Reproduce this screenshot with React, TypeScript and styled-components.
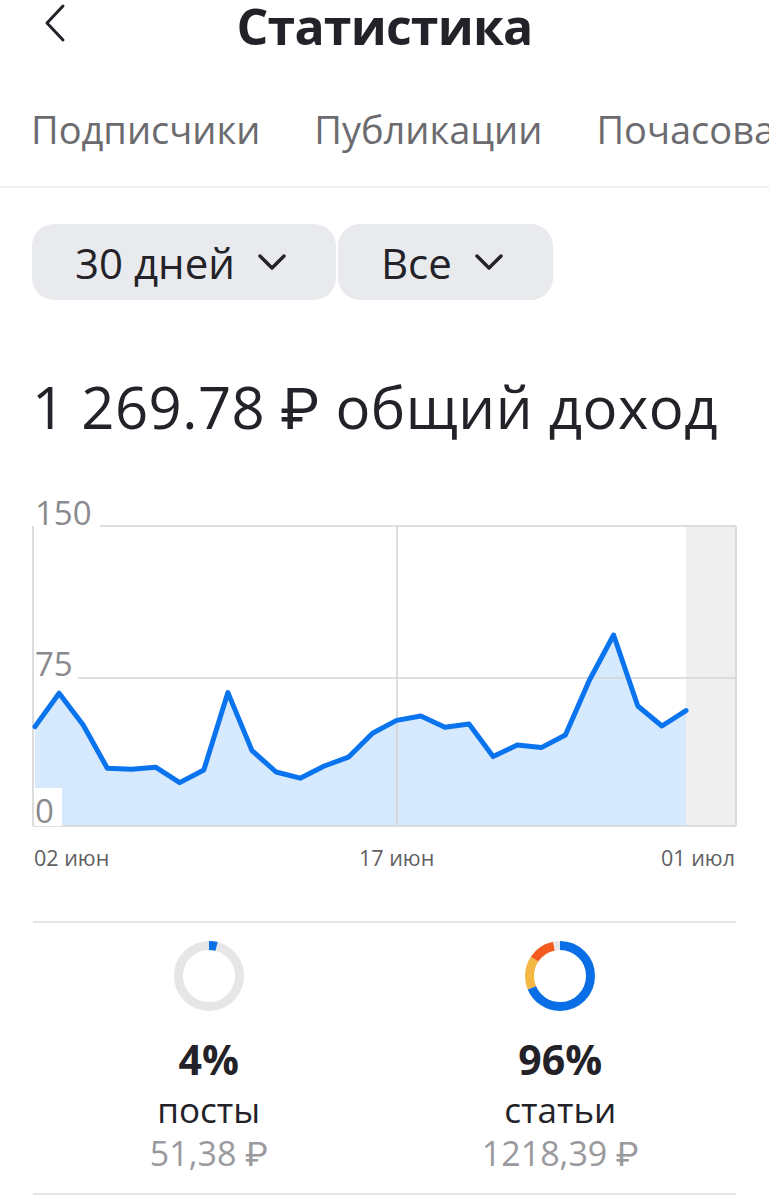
import React from 'react';
import styled, { createGlobalStyle } from 'styled-components';

const GlobalStyle = createGlobalStyle`
  * { box-sizing: border-box; }
  body {
    margin: 0;
    background: #fff;
    font-family: "Open Sans", Roboto, "DejaVu Sans", sans-serif;
    color: #222228;
  }
`;

const Page = styled.div`
  width: 769px;
  height: 1200px;
  overflow: hidden;
  background: #fff;
`;

const Header = styled.header`
  display: grid;
  grid-template-columns: 1fr auto 1fr;
  align-items: center;
  height: 52px;
`;

const BackButton = styled.button`
  justify-self: start;
  display: flex;
  align-items: center;
  margin: -6px 0 0 42px;
  padding: 0;
  border: 0;
  background: none;
  cursor: pointer;
`;

const Title = styled.h1`
  margin: 0;
  font-size: 50px;
  font-weight: 700;
  letter-spacing: -0.8px;
  line-height: 52px;
  color: #222228;
`;

const Tabs = styled.nav`
  display: flex;
  gap: 54px;
  height: 136px;
  padding: 55px 0 0 31px;
  white-space: nowrap;
  overflow: hidden;
  border-bottom: 2px solid #eef0f0;
`;

const Tab = styled.span`
  font-size: 38px;
  line-height: 44px;
  color: #6b6b70;
`;

const Filters = styled.div`
  display: flex;
  gap: 2px;
  padding: 36px 0 0 32px;
`;

const FilterButton = styled.button`
  display: flex;
  align-items: center;
  gap: 23px;
  height: 76px;
  padding: 0 50px 0 43px;
  border: 0;
  border-radius: 22px;
  background: #e9eaee;
  font-family: inherit;
  font-size: 42px;
  color: #222228;
`;

const Total = styled.h2`
  margin: 75px 0 0 32px;
  font-size: 58px;
  font-weight: 400;
  letter-spacing: 0.5px;
  line-height: 64px;
  color: #222228;
  white-space: nowrap;
`;

const ChartBox = styled.div`
  margin-top: 51px;
  height: 390px;
`;

const Stats = styled.section`
  display: grid;
  grid-template-columns: 1fr 1fr;
  margin: 41px 33px 0;
  padding: 18px 0 20px;
  border-top: 2px solid #e4e4e6;
  border-bottom: 2px solid #e4e4e6;
`;

const Stat = styled.div`
  display: flex;
  flex-direction: column;
  align-items: center;
`;

const Percent = styled.div`
  margin-top: 26px;
  font-size: 41px;
  font-weight: 700;
  line-height: 44px;
  color: #222228;
`;

const StatLabel = styled.div`
  margin-top: 9px;
  font-size: 35px;
  line-height: 40px;
  color: #222228;
`;

const StatAmount = styled.div`
  margin-top: 3px;
  font-size: 34px;
  line-height: 40px;
  color: #9a9a9e;
`;

const ChevronDown = () => (
  <svg width="28" height="16" viewBox="0 0 28 16" fill="none">
    <path d="M2 2l12 12L26 2" stroke="#222228" strokeWidth="3.4" strokeLinecap="round" strokeLinejoin="round" />
  </svg>
);

const ChevronLeft = () => (
  <svg width="24" height="40" viewBox="0 0 24 40" fill="none">
    <path d="M21 3L5 20l16 17" stroke="#222228" strokeWidth="3" strokeLinecap="round" strokeLinejoin="round" />
  </svg>
);

// daily income, 02 июн .. 29 июн
const income = [
  49.7, 66.4, 50.5, 28.9, 28.4, 29.4, 21.7, 28, 66.7, 37.7, 27, 23.9, 30, 34.4, 46.4, 52.8,
  55, 49.4, 51, 34.7, 40.5, 39.2, 45.5, 73, 95.5, 60, 50, 57.7,
];

const X0 = 35;
const STEP = 24.11;
const TOP = 36;
const BOTTOM = 336;
const LEFT = 33;
const RIGHT = 736;

const yOf = (v: number) => BOTTOM - (v / 150) * (BOTTOM - TOP);

const IncomeChart = () => {
  const pts = income.map((v, i) => [X0 + i * STEP, yOf(v)] as const);
  const line = pts.map(([x, y], i) => `${i ? 'L' : 'M'}${x.toFixed(1)} ${y.toFixed(1)}`).join(' ');
  const lastX = pts[pts.length - 1][0];
  const area = `${line} L${lastX.toFixed(1)} ${BOTTOM} L${X0} ${BOTTOM} Z`;
  const mid = yOf(75) + 2;
  const labelFont = { fontFamily: '"Open Sans", Roboto, sans-serif' };

  return (
    <svg width="769" height="390" viewBox="0 0 769 390">
      <rect x={686} y={TOP} width={RIGHT - 686} height={BOTTOM - TOP} fill="#efefef" />
      <path d={area} fill="#d7e9fc" />
      <g stroke="#d4d4d6" strokeWidth="1.6">
        <line x1={100} y1={TOP} x2={RIGHT} y2={TOP} />
        <line x1={78} y1={mid} x2={RIGHT} y2={mid} />
        <line x1={LEFT} y1={BOTTOM} x2={RIGHT} y2={BOTTOM} />
        <line x1={LEFT} y1={TOP} x2={LEFT} y2={BOTTOM} />
        <line x1={397} y1={TOP} x2={397} y2={BOTTOM} />
        <line x1={RIGHT} y1={TOP} x2={RIGHT} y2={BOTTOM} />
      </g>
      <path d={line} fill="none" stroke="#0a74ef" strokeWidth="5" strokeLinejoin="round" strokeLinecap="round" />
      <rect x={35} y={298} width={27} height={38} fill="#fff" />
      <g fill="#8a8a8e" fontSize="33" style={labelFont}>
        <text x={35} y={35}>150</text>
        <text x={35} y={186}>75</text>
        <text x={35} y={333}>0</text>
      </g>
      <g fill="#5f5f63" fontSize="21.5" style={labelFont}>
        <text x={34} y={376}>02 июн</text>
        <text x={359} y={376}>17 июн</text>
        <text x={735} y={376} textAnchor="end">01 июл</text>
      </g>
    </svg>
  );
};

interface Segment {
  color: string;
  from: number;
  to: number;
}

const Donut = ({ segments }: { segments: Segment[] }) => {
  const r = 30.5;
  const c = 2 * Math.PI * r;
  return (
    <svg width="70" height="70" viewBox="0 0 70 70">
      <g transform="rotate(-90 35 35)">
        {segments.map((s, i) => {
          const len = (s.to - s.from) * c;
          return (
            <circle
              key={i}
              cx="35"
              cy="35"
              r={r}
              fill="none"
              stroke={s.color}
              strokeWidth="9"
              strokeDasharray={`${len} ${c - len}`}
              strokeDashoffset={-s.from * c}
            />
          );
        })}
      </g>
    </svg>
  );
};

const stats = [
  {
    percent: '4%',
    label: 'посты',
    amount: '51,38 ₽',
    segments: [
      { color: '#e6e6e8', from: 0, to: 1 },
      { color: '#0a6fe6', from: 0, to: 0.04 },
    ],
  },
  {
    percent: '96%',
    label: 'статьи',
    amount: '1218,39 ₽',
    segments: [
      { color: '#0a6fe6', from: 0, to: 0.686 },
      { color: '#f3b844', from: 0.686, to: 0.842 },
      { color: '#f45a1e', from: 0.842, to: 0.967 },
      { color: '#e6e6e8', from: 0.967, to: 1 },
    ],
  },
];

export default function App() {
  return (
    <Page>
      <GlobalStyle />
      <Header>
        <BackButton aria-label="Назад">
          <ChevronLeft />
        </BackButton>
        <Title>Статистика</Title>
        <span />
      </Header>
      <Tabs>
        <Tab>Подписчики</Tab>
        <Tab>Публикации</Tab>
        <Tab>Почасовая</Tab>
      </Tabs>
      <Filters>
        <FilterButton>
          30 дней <ChevronDown />
        </FilterButton>
        <FilterButton>
          Все <ChevronDown />
        </FilterButton>
      </Filters>
      <Total>1 269.78 ₽ общий доход</Total>
      <ChartBox>
        <IncomeChart />
      </ChartBox>
      <Stats>
        {stats.map(s => (
          <Stat key={s.label}>
            <Donut segments={s.segments} />
            <Percent>{s.percent}</Percent>
            <StatLabel>{s.label}</StatLabel>
            <StatAmount>{s.amount}</StatAmount>
          </Stat>
        ))}
      </Stats>
    </Page>
  );
}
